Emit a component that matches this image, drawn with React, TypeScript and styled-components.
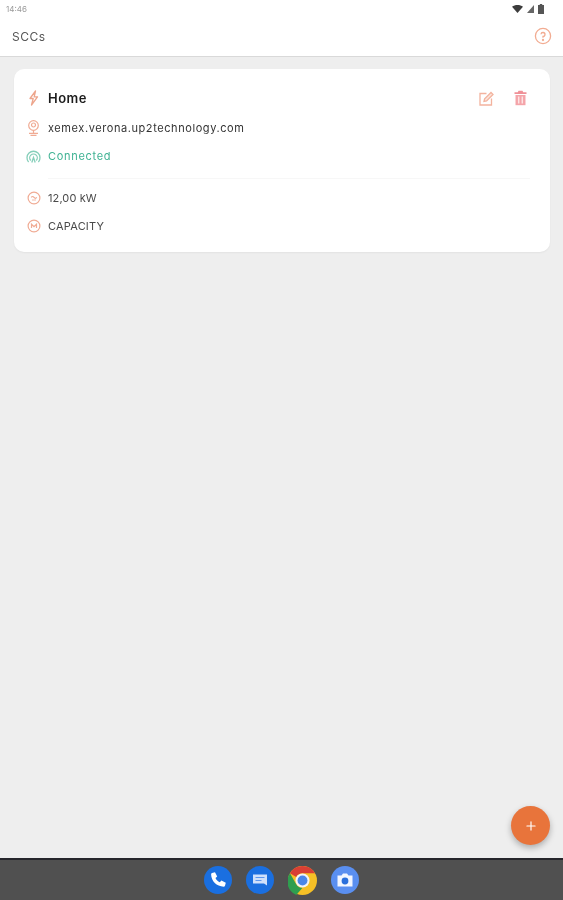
import React from "react";
import styled, { createGlobalStyle } from "styled-components";
import { Plus } from "lucide-react";

const GlobalStyle = createGlobalStyle`
  html, body {
    margin: 0;
    padding: 0;
    background: #eeeeee;
    font-family: "Inter", "Liberation Sans", sans-serif;
  }
`;

function BoltIcon() {
  return (
    <svg width="11" height="16" viewBox="0 0 11 16" fill="none" stroke="#eda58c" strokeWidth="1.3" strokeLinejoin="round">
      <path d="M7.500 1L2 8.500h3.200L3.500 15 9.500 6.800H6.200z" />
    </svg>
  );
}

function RouterIcon() {
  return (
    <svg width="13" height="16" viewBox="0 0 13 16" fill="none" stroke="#f0ab94" strokeWidth="1.2">
      <circle cx="6.500" cy="5.500" r="4.800" />
      <circle cx="6.500" cy="5" r="2" />
      <path d="M6.500 10.300V13M2 13.300h9M3.500 15.300h6" />
    </svg>
  );
}

function SignalIcon() {
  return (
    <svg width="15" height="13" viewBox="0 0 15 13" fill="none" stroke="#86cfba" strokeWidth="1.300">
      <path d="M2.600 12A6.500 6.500 0 1 1 12.400 12" />
      <path d="M4.800 10.500A3.800 3.800 0 1 1 10.200 10.500" />
      <path d="M5.800 12.500L7.500 7.500l1.700 5" />
    </svg>
  );
}

function PowerIcon() {
  return (
    <svg width="14" height="14" viewBox="0 0 14 14" fill="none" stroke="#f0ab94" strokeWidth="1.200">
      <circle cx="7" cy="7" r="5.900" />
      <path d="M4.200 6.400c1-1.200 1.800-1.200 2.800 0s1.800 1.200 2.800 0" />
      <path d="M5 9h4" strokeWidth="0.8" />
    </svg>
  );
}

function CapacityIcon() {
  return (
    <svg width="14" height="14" viewBox="0 0 14 14" fill="none" stroke="#f0ab94" strokeWidth="1.200">
      <circle cx="7" cy="7" r="5.900" />
      <path d="M4.500 9V5.200L7 7.600l2.500-2.400V9" />
    </svg>
  );
}

function HelpIcon() {
  return (
    <svg width="18" height="18" viewBox="0 0 18 18" fill="none" stroke="#f2ac92" strokeWidth="1.300">
      <circle cx="9" cy="9" r="7.600" />
      <path d="M7 7.300A2 2 0 1 1 9 9.500v1.300" />
      <circle cx="9" cy="13" r="0.500" />
    </svg>
  );
}

function EditIcon() {
  return (
    <svg width="15" height="15" viewBox="0 0 15 15" fill="none" stroke="#f3b39e" strokeWidth="1.300">
      <path d="M7.500 2.500H1v11.500h11.500V7.500" />
      <path d="M5 10.500l.6-2.600L12 1.500l2 2-6.400 6.400z" fill="#fbe3da" />
    </svg>
  );
}

function TrashIcon() {
  return (
    <svg width="13" height="16" viewBox="0 0 13 16">
      <path d="M4.500 0.800h4l.7 1.400H12.500v1.800H.5V2.200h3.300z" fill="#ef9097" />
      <path d="M1.500 5h10v10.200h-10z" fill="#f4a4a9" />
      <path d="M4.700 6.500v7M8.300 6.500v7" stroke="#fde3e3" strokeWidth="1.500" />
    </svg>
  );
}

function WifiIcon() {
  return (
    <svg width="11" height="8" viewBox="0 0 11 8">
      <path d="M0 1.800C3 -0.600 8 -0.600 11 1.800L5.500 8z" fill="#3c3c3c" />
    </svg>
  );
}

function CellIcon() {
  return (
    <svg width="7" height="8" viewBox="0 0 7 8">
      <path d="M0 8L7 0v8z" fill="#666" />
    </svg>
  );
}

function BatteryIcon() {
  return (
    <svg width="6" height="10" viewBox="0 0 6 10">
      <path d="M1.800 0h2.400v1H6v9H0V1h1.800z" fill="#555" />
    </svg>
  );
}

function PhoneGlyph() {
  return (
    <svg width="28" height="28" viewBox="0 0 28 28">
      <circle cx="14" cy="14" r="14" fill="#1a6fe0" />
      <path
        d="M8 7l3-.8 2.200 4.300-1.700 1.500c.9 2 2.300 3.400 4.300 4.300l1.600-1.700 4.400 2.200-.8 3c-.2.600-.7.900-1.300.9C12.600 20.500 7.300 15.200 7.100 8.300c0-.6.300-1.100.9-1.300z"
        fill="#fff"
      />
    </svg>
  );
}

function MessagesGlyph() {
  return (
    <svg width="28" height="28" viewBox="0 0 28 28">
      <circle cx="14" cy="14" r="14" fill="#1a6fe0" />
      <path d="M7 8.500h14v11l-3-2H7z" fill="#cfe0fb" />
      <path d="M9.500 11.500h9M9.500 14.500h6" stroke="#5d97ee" strokeWidth="1" />
    </svg>
  );
}

function ChromeGlyph() {
  return (
    <svg width="29" height="29" viewBox="0 0 28 28">
      <circle cx="14" cy="14" r="14" fill="#f6c026" />
      <path d="M14 0a14 14 0 0 1 12.100 7H14a7 7 0 0 0-6.100 3.500L1.900 7A14 14 0 0 1 14 0z" fill="#d93f34" />
      <path d="M1.900 7l6 10.500A7 7 0 0 0 14 21l-6 7A14 14 0 0 1 1.900 7z" fill="#2f9e4f" />
      <circle cx="14" cy="14" r="6.800" fill="#f4f4f4" />
      <circle cx="14" cy="14" r="4.800" fill="#4a86e8" />
    </svg>
  );
}

function CameraGlyph() {
  return (
    <svg width="28" height="28" viewBox="0 0 28 28">
      <circle cx="14" cy="14" r="14" fill="#5a8ff0" />
      <path d="M6.500 9.500h4l1.500-2h4l1.500 2h4v11h-15z" fill="#f2f6ff" />
      <circle cx="14" cy="15" r="3.400" fill="#2a6fdc" />
    </svg>
  );
}

export default function App() {
  return (
    <Screen>
      <GlobalStyle />
      <TopBar>
        <StatusBar>
          <Clock>14:46</Clock>
          <StatusIcons>
            <WifiIcon />
            <CellIcon />
            <BatteryIcon />
          </StatusIcons>
        </StatusBar>
        <Header>
          <Title>SCCs</Title>
          <HelpIcon />
        </Header>
      </TopBar>

      <Content>
        <Card>
          <CardHead>
            <IconSlot>
              <BoltIcon />
            </IconSlot>
            <Name>Home</Name>
            <Actions>
              <EditIcon />
              <TrashIcon />
            </Actions>
          </CardHead>
          <Row>
            <IconSlot>
              <RouterIcon />
            </IconSlot>
            <RowText>xemex.verona.up2technology.com</RowText>
          </Row>
          <Row>
            <IconSlot>
              <SignalIcon />
            </IconSlot>
            <RowText $tone="#3fb293" $spacing={0.7}>Connected</RowText>
          </Row>
          <Divider />
          <Row>
            <IconSlot>
              <PowerIcon />
            </IconSlot>
            <RowText $tone="#4a4a4a" $spacing={0.1}>12,00 kW</RowText>
          </Row>
          <Row>
            <IconSlot>
              <CapacityIcon />
            </IconSlot>
            <RowText $tone="#4a4a4a" $spacing={0.2}>CAPACITY</RowText>
          </Row>
        </Card>
        <Fab>
          <Plus size={14} color="#fff" strokeWidth={2} />
        </Fab>
      </Content>

      <Dock>
        <PhoneGlyph />
        <MessagesGlyph />
        <ChromeGlyph />
        <CameraGlyph />
      </Dock>
    </Screen>
  );
}

const Screen = styled.div`
  display: flex;
  flex-direction: column;
  width: 563px;
  height: 900px;
  overflow: hidden;
  filter: blur(0.45px);
`;

const TopBar = styled.header`
  flex: none;
  height: 57px;
  box-sizing: border-box;
  background: #ffffff;
  border-bottom: 1px solid #d9d9d9;
  box-shadow: 0 1px 2px rgba(0, 0, 0, 0.08);
`;

const StatusBar = styled.div`
  display: flex;
  align-items: center;
  justify-content: space-between;
  height: 18px;
  padding: 0 19px 0 6px;
`;

const Clock = styled.span`
  font-size: 8px;
  color: #9a9a9a;
`;

const StatusIcons = styled.div`
  display: flex;
  align-items: center;
  gap: 4px;
`;

const Header = styled.div`
  display: flex;
  align-items: center;
  justify-content: space-between;
  height: 36px;
  padding: 0 11px 0 12px;
`;

const Title = styled.h1`
  margin: 0;
  font-size: 12px;
  font-weight: 400;
  letter-spacing: 0.5px;
  color: #555555;
`;

const Content = styled.main`
  position: relative;
  flex: 1;
  padding: 12px 13px 0 14px;
  background: #eeeeee;
`;

const Card = styled.section`
  display: flex;
  flex-direction: column;
  box-sizing: border-box;
  height: 183px;
  padding: 17px 23px 0 12px;
  background: #ffffff;
  border-radius: 10px;
  box-shadow: 0 1px 2px rgba(0, 0, 0, 0.05);
`;

const CardHead = styled.div`
  display: flex;
  align-items: center;
  gap: 7px;
  height: 24px;
  margin-bottom: 4px;
`;

const IconSlot = styled.span`
  display: flex;
  flex: none;
  align-items: center;
  justify-content: center;
  width: 15px;
`;

const Name = styled.span`
  font-size: 13px;
  font-weight: 600;
  letter-spacing: 0.5px;
  color: #1c1c1c;
`;

const Actions = styled.div`
  display: flex;
  align-items: center;
  gap: 20px;
  margin-left: auto;
`;

const Row = styled.div`
  display: flex;
  align-items: center;
  gap: 7px;
  height: 28px;
`;

const RowText = styled.span<{ $tone?: string; $spacing?: number }>`
  font-size: 11px;
  letter-spacing: ${(p) => p.$spacing ?? 0.58}px;
  color: ${(p) => p.$tone ?? "#333333"};
`;

const Divider = styled.hr`
  width: 482px;
  margin: 8px 0 5px 22px;
  border: 0;
  border-top: 1px solid #f7f7f7;
`;

const Fab = styled.button`
  position: absolute;
  right: 13px;
  bottom: 13px;
  display: flex;
  align-items: center;
  justify-content: center;
  width: 39px;
  height: 39px;
  padding: 0;
  border: 0;
  border-radius: 50%;
  background: #e8743b;
  box-shadow: 0 3px 6px rgba(0, 0, 0, 0.28);
`;

const Dock = styled.footer`
  display: flex;
  flex: none;
  align-items: center;
  justify-content: center;
  gap: 14px;
  height: 42px;
  box-sizing: border-box;
  background: #505050;
  border-top: 2px solid #26262b;
`;
